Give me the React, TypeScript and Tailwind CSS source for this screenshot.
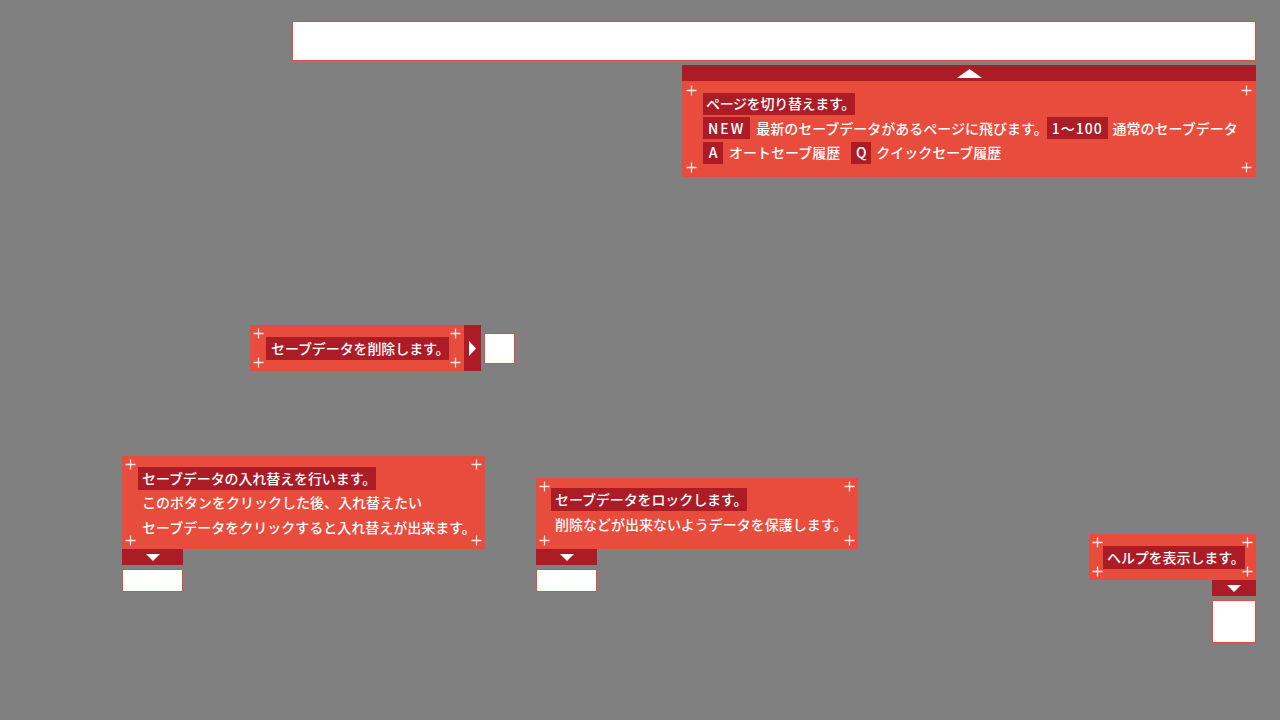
import React from "react";

const FONT = { fontFamily: '"Noto Sans CJK JP", "Noto Sans", sans-serif' };

function Plus({ pos }: { pos: string }) {
  return (
    <svg className={`absolute ${pos} w-[11px] h-[11px] opacity-90`} viewBox="0 0 11 11">
      <path d="M5.5 0.5v10M0.5 5.5h10" stroke="#fff" strokeWidth="1.3" />
    </svg>
  );
}

function Corners({ inset = "3" }: { inset?: "3" | "4" }) {
  if (inset === "4") {
    return (
      <>
        <Plus pos="left-[4px] top-[4px]" />
        <Plus pos="right-[4px] top-[4px]" />
        <Plus pos="left-[4px] bottom-[4px]" />
        <Plus pos="right-[4px] bottom-[4px]" />
      </>
    );
  }
  return (
    <>
      <Plus pos="left-[3px] top-[3px]" />
      <Plus pos="right-[3px] top-[3px]" />
      <Plus pos="left-[3px] bottom-[3px]" />
      <Plus pos="right-[3px] bottom-[3px]" />
    </>
  );
}

function Badge({ children, className = "" }: { children: React.ReactNode; className?: string }) {
  return (
    <span className={`inline-flex items-center h-[22px] bg-[#ac1c26] ${className}`}>{children}</span>
  );
}

function DownBar({ w }: { w: string }) {
  return (
    <div className={`${w} h-[16px] bg-[#ac1c26] flex items-center justify-center`}>
      <svg width="14" height="7" viewBox="0 0 14 7">
        <path d="M0 0h14L7 7z" fill="#fff" />
      </svg>
    </div>
  );
}

export default function App() {
  return (
    <div className="relative w-[1280px] h-[720px] overflow-hidden bg-[#808080] text-white text-[14px] font-medium" style={FONT}>
      {/* page input bar */}
      <div className="absolute left-[292px] top-[21px] w-[964px] h-[40px] bg-white border border-[#e84c3d]" />

      {/* page switch help */}
      <div className="absolute left-[682px] top-[65px] w-[574px]">
        <div className="h-[16px] bg-[#ac1c26] flex items-center justify-center">
          <svg width="25" height="9" viewBox="0 0 25 9">
            <path d="M12.5 0L25 9H0z" fill="#fff" />
          </svg>
        </div>
        <div className="relative bg-[#e84c3d] pl-[21px] pt-[10.5px] pb-[11.5px]">
          <Corners inset="4" />
          <div className="h-[24.5px] flex items-center">
            <Badge className="pl-[3px] pr-0 tracking-[-0.3px]">ページを切り替えます。</Badge>
          </div>
          <div className="h-[24.5px] flex items-center whitespace-nowrap">
            <Badge className="tracking-[2px] px-[5px]">NEW</Badge>
            <span className="ml-[6px]">最新のセーブデータがあるページに飛びます。</span>
            <Badge className="-ml-[1px] px-[5px] tracking-[1px]">1〜100</Badge>
            <span className="ml-[5px]">通常のセーブデータ</span>
          </div>
          <div className="h-[24.5px] flex items-center whitespace-nowrap">
            <Badge className="w-[20px] justify-center">A</Badge>
            <span className="ml-[6px]">オートセーブ履歴</span>
            <Badge className="ml-[11px] w-[20px] justify-center">Q</Badge>
            <span className="ml-[5px]">クイックセーブ履歴</span>
          </div>
        </div>
      </div>

      {/* delete */}
      <div className="absolute left-[250px] top-[325px] flex items-center">
        <div className="relative w-[214px] h-[46px] bg-[#e84c3d] pl-[16px] flex items-center">
          <Corners />
          <Badge className="h-[23px] pl-[5px] pr-0 tracking-[-0.1px]">セーブデータを削除します。</Badge>
        </div>
        <div className="w-[17px] h-[46px] bg-[#ac1c26] flex items-center justify-center">
          <svg width="7" height="15" viewBox="0 0 7 15">
            <path d="M0 0l7 7.5L0 15z" fill="#fff" />
          </svg>
        </div>
        <div className="ml-[3px] w-[31px] h-[31px] bg-white border border-[#e84c3d]" />
      </div>

      {/* swap */}
      <div className="absolute left-[122px] top-[456px]">
        <div className="relative w-[363px] bg-[#e84c3d] pl-[16px] pt-[10px] pb-[9.5px] whitespace-nowrap">
          <Corners />
          <div className="h-[24.5px] flex items-center">
            <Badge className="h-[23px] pl-[4px] pr-0 tracking-[-0.1px]">セーブデータの入れ替えを行います。</Badge>
          </div>
          <div className="h-[24.5px] flex items-center pl-[4px]">このボタンをクリックした後、入れ替えたい</div>
          <div className="h-[24.5px] flex items-center pl-[4px]">セーブデータをクリックすると入れ替えが出来ます。</div>
        </div>
        <DownBar w="w-[61px]" />
        <div className="mt-[4px] w-[61px] h-[23px] bg-white border border-[#e84c3d]" />
      </div>

      {/* lock */}
      <div className="absolute left-[536px] top-[478px]">
        <div className="relative w-[322px] h-[71px] bg-[#e84c3d] pl-[15px] pt-[9.5px] whitespace-nowrap">
          <Corners />
          <div className="h-[24.5px] flex items-center">
            <Badge className="h-[23px] pl-[4px] pr-0 tracking-[-0.1px]">セーブデータをロックします。</Badge>
          </div>
          <div className="h-[24.5px] flex items-center pl-[4px]">削除などが出来ないようデータを保護します。</div>
        </div>
        <DownBar w="w-[61px]" />
        <div className="mt-[4px] w-[61px] h-[23px] bg-white border border-[#e84c3d]" />
      </div>

      {/* help */}
      <div className="absolute left-[1089px] top-[534px] flex flex-col items-end">
        <div className="relative w-[167px] h-[46px] bg-[#e84c3d] pl-[14px] flex items-center whitespace-nowrap">
          <Corners />
          <Badge className="h-[23px] pl-[4px] pr-0 tracking-[-0.1px]">ヘルプを表示します。</Badge>
        </div>
        <DownBar w="w-[44px]" />
        <div className="mt-[4px] w-[44px] h-[43px] bg-white border border-[#e84c3d]" />
      </div>
    </div>
  );
}
